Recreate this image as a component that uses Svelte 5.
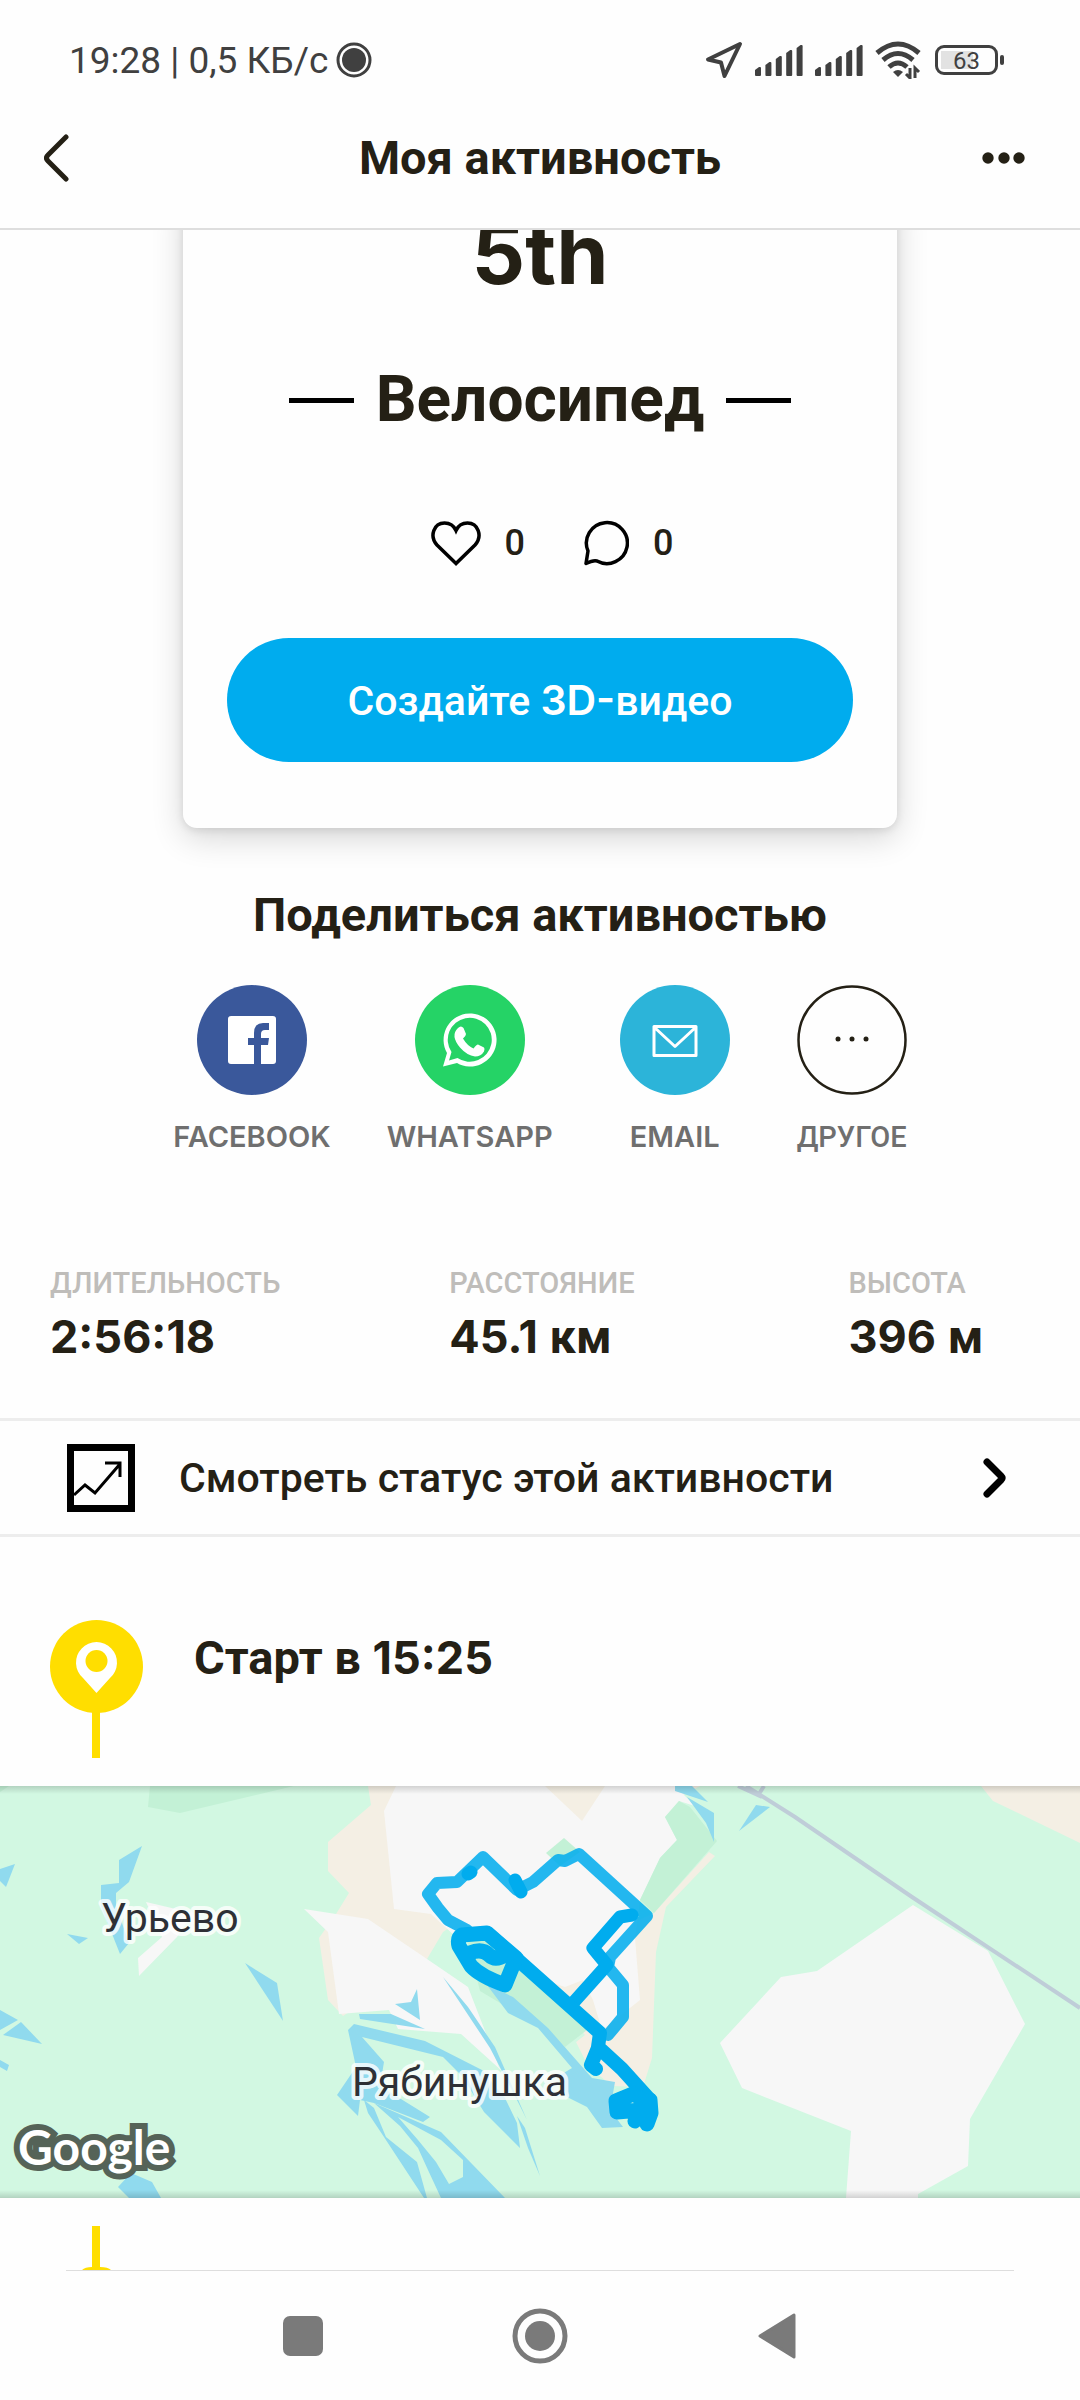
<script lang="ts">
  type Stat = {
    label: string
    value: string
    unit?: string
  }

  const stats: Stat[] = [
    { label: 'Длительность', value: '2:56:18' },
    { label: 'Расстояние', value: '45.1', unit: 'км' },
    { label: 'Высота', value: '396', unit: 'м' },
  ]

  const bars = [8, 13, 19, 25, 30]

  const water = [
    '0,83 15,78 6,101 0,95',
    '119,74 142,60 129,96 116,107 116,120 129,157 120,168 101,120 101,99 119,97',
    '67,148 88,152 79,158',
    '245,177 277,197 283,235',
    '0,224 18,234 0,244',
    '21,236 42,258 3,249',
    '0,274 9,279 7,285 0,281',
    '131,387 152,396 161,412 129,412 118,401',
    '395,218 411,216 417,203 420,234',
    '359,228 391,228 425,243 360,233',
    '354,238 425,255 482,284 505,312 517,337 520,362 484,326 462,290 443,271 362,251 384,276 380,300 430,331 423,336 374,317 360,314 358,330 337,309 356,281 348,244',
    '364,314 374,322 386,351 417,376 427,412 424,412 384,351 368,327',
    '374,317 441,346 505,412 441,412 428,384 418,362 400,340',
    '443,191 468,221 495,261 527,334 518,316 490,262',
    '517,330 525,342 540,390 528,362',
    '487,199 513,211 548,242 592,292 615,296 610,324 623,341 602,342 587,321 567,311 557,291 572,282 538,242 508,227',
    '675,0 692,0 708,16 675,5',
    '687,11 714,27 714,56 706,37',
    '756,19 770,21 739,45',
  ]
</script>

<div class="screen">
  <div class="status">
    <span>19:28 | 0,5 КБ/с</span>
    <svg class="record" width="36" height="36" viewBox="0 0 36 36" aria-hidden="true">
      <circle cx="18" cy="18" r="16" fill="none" stroke="currentColor" stroke-width="3" />
      <circle cx="18" cy="18" r="12" fill="currentColor" />
    </svg>
    <div class="indicators">
      <svg width="38" height="38" viewBox="0 0 38 38" aria-hidden="true">
        <path d="M35 3 3 18.500l13 3L19.500 35Z" fill="none" stroke="currentColor" stroke-width="4" stroke-linejoin="round" />
      </svg>
      {#each [0, 1] as sim (sim)}
        <svg width="48" height="31" viewBox="0 0 48 31" aria-hidden="true">
          {#each bars as height, i (i)}
            <path d="M{i * 10.400} 30v{3 - height}l4 -3h1q1 0 1 1V30q0 1-1 1h-4q-1 0-1-1z" fill="currentColor" />
          {/each}
        </svg>
      {/each}
      <svg width="48" height="38" viewBox="0 0 48 38" aria-hidden="true">
        <g fill="none" stroke="currentColor" stroke-width="5">
          <path d="M2 12q21-18 42 0M8 19q15-13 30 0M14 26q9-8 18 0" />
        </g>
        <path d="M18 31q5-4 10 0l-5 5z" fill="currentColor" />
        <path d="M35 27v10l-4-4M40 37V27l4 4" fill="none" stroke="currentColor" stroke-width="3" />
      </svg>
      <div class="battery"><span>63</span></div>
    </div>
  </div>

  <header>
    <button type="button" aria-label="Назад">
      <svg width="26" height="48" viewBox="0 0 26 48">
        <path d="M22 3 4 21q-3 3 0 6l18 18" fill="none" stroke="currentColor" stroke-width="5" stroke-linecap="round" />
      </svg>
    </button>
    <h1>Моя активность</h1>
    <button type="button" aria-label="Ещё">
      <svg width="44" height="12" viewBox="0 0 44 12" fill="currentColor">
        <circle cx="6" cy="6" r="5.700" /><circle cx="22" cy="6" r="5.700" /><circle cx="37" cy="6" r="5.700" />
      </svg>
    </button>
  </header>

  <main>
    <section class="card">
      <p class="rank">5th</p>
      <h2 class="sport">Велосипед</h2>
      <div class="reactions">
        <button type="button" aria-label="Нравится">
          <svg width="50" height="46" viewBox="0 0 50 46">
            <path d="M25 43.500 6 25C-2 16 3 3 13.500 3 19 3 23 6 25 10.500 27 6 31 3 36.500 3 47 3 52 16 44 25Z" fill="none" stroke="#000" stroke-width="3.500" />
          </svg>
          0
        </button>
        <button type="button" aria-label="Комментарии">
          <svg width="46" height="46" viewBox="0 0 46 46">
            <path d="M3 43.500 5 31A20.500 20.500 0 1 1 14 41Q10 40 3 43.500Z" fill="none" stroke="#000" stroke-width="3.500" stroke-linejoin="round" />
          </svg>
          0
        </button>
      </div>
      <button type="button" class="primary">Создайте <span class="latin">3D-</span>видео</button>
    </section>

    <section class="share">
      <h2>Поделиться активностью</h2>
      <div class="targets">
        <button type="button">
          <svg width="110" height="110" viewBox="0 0 110 110">
            <circle cx="55" cy="55" r="55" fill="#3a589b" />
            <rect x="31" y="31" width="48" height="48" rx="3" fill="#fff" />
            <path d="M57 79V60h-6v-7h6v-5q0-10 9-10h6v7h-4q-4 0-4 4v4h8l-1 7h-7v19z" fill="#3a589b" />
          </svg>
          <span class="latin">FACEBOOK</span>
        </button>
        <button type="button">
          <svg width="110" height="110" viewBox="0 0 110 110">
            <circle cx="55" cy="55" r="55" fill="#25d366" />
            <path d="M28 81.500 32 68A26.500 26.500 0 1 1 42 78Zm6-6 8.500-2.500A22 22 0 1 0 36.500 67Z" fill="#fff" fill-rule="evenodd" />
            <path d="M43 43q3-3 5.500 0l2.500 6q0 2-3 4.500 4 7 10.500 10 3-4 4.500-4l6 3q1 1 0 4-3 5-9 5-8-1-15-9-10-12-2-19.500z" fill="#fff" />
          </svg>
          <span class="latin">WHATSAPP</span>
        </button>
        <button type="button" class="email">
          <svg width="110" height="110" viewBox="0 0 110 110">
            <circle cx="55" cy="55" r="55" fill="#2cb4d9" />
            <path d="M34 41.500h42v29H34zM34 42l21 19.500L76 42" fill="none" stroke="#fff" stroke-width="3" stroke-linejoin="round" />
          </svg>
          <span class="latin">EMAIL</span>
        </button>
        <button type="button">
          <svg width="110" height="110" viewBox="0 0 110 110">
            <circle cx="55" cy="55" r="53.500" fill="none" stroke="#242015" stroke-width="2.500" />
            <g fill="#242015"><circle cx="41" cy="54" r="2.500" /><circle cx="55" cy="54" r="2.500" /><circle cx="69" cy="54" r="2.500" /></g>
          </svg>
          <span>ДРУГОЕ</span>
        </button>
      </div>
    </section>

    <dl class="stats">
      {#each stats as stat (stat.label)}
        <div>
          <dt>{stat.label}</dt>
          <dd><span class="latin">{stat.value}</span>{#if stat.unit}&nbsp;{stat.unit}{/if}</dd>
        </div>
      {/each}
    </dl>

    <a class="status-link" href="#status">
      <svg width="68" height="68" viewBox="0 0 68 68">
        <rect x="3.500" y="3.500" width="61" height="61" fill="none" stroke="#000" stroke-width="7" />
        <path d="m7 51 11-10 10 8 25-29M38 19h15v14" fill="none" stroke="#000" stroke-width="3" />
      </svg>
      <span>Смотреть статус этой активности</span>
      <svg class="chevron" width="26" height="42" viewBox="0 0 26 42">
        <path d="m5 5 14 14q2 2 0 4L5 37" fill="none" stroke="#000" stroke-width="7" stroke-linecap="round" />
      </svg>
    </a>

    <section class="start">
      <svg width="94" height="138" viewBox="0 0 94 138" aria-hidden="true">
        <circle cx="46.500" cy="46.500" r="46.500" fill="#ffde00" />
        <path d="M42 90h8v48h-8z" fill="#ffde00" />
        <path d="M46.500 73Q42 68 33 58A20.500 20.500 0 1 1 60 58Q51 68 46.500 73Z" fill="#fff" />
        <circle cx="46.500" cy="41" r="11" fill="#ffde00" />
      </svg>
      <h3>Старт в <span class="latin">15:25</span></h3>
    </section>

    <svg class="map" viewBox="0 0 1080 412" role="img" aria-label="Карта маршрута">
      <defs>
        <linearGradient id="edge" x2="0" y2="1">
          <stop stop-opacity="0.15" />
          <stop offset="1" stop-opacity="0" />
        </linearGradient>
      </defs>
      <rect width="1080" height="412" fill="#d2f8e2" />

      <!-- fields and forest -->
      <g fill="#f4efe4">
        <path d="M368 0 371 19 328 56V85L349 107 336 128 319 152 328 214 343 230 427 173 443 146 480 120 700 0Z" />
        <path d="M709 66 715 70 666 121 656 166 652 272 643 301 612 300 588 280 576 256 585 249 540 201 583 160 654 127Z" />
        <path d="M981 0 993 15 1080 57V0Z" />
      </g>
      <g fill="#f7f7f7">
        <path d="M396 0 384 25 394 123 431 128 455 150 500 155 545 194 565 201 583 194 593 214 602 244 640 214 635 152 640 114 660 72 677 54 665 31 679 15 695 20 675 0H605L582 35 545 0Z" />
        <path d="M304 123 368 133 427 173 468 201 480 232 499 281 503 286 461 248 398 243 389 224 339 228 328 146Z" />
        <path d="M146 116 193 127 177 151 139 190 138 172 162 151Z" />
        <path d="M913 119 988 165 1025 238 970 333 968 380 918 408V412H846L851 345 742 302 720 257 781 191 817 185Z" />
      </g>
      <g fill="#c3f1d6">
        <path d="M150 0 148 21 180 27 294 0ZM0 0H9L0 6Z" />
        <path d="M679 15 665 31 677 54 660 72 640 114 654 127 717 55 690 21Z" />
        <path d="M546 67 564 52 580 66 560 80Z" />
        <path d="M465 145 500 160 587 244 565 261 545 242 505 220 480 205Z" />
      </g>

      <g fill="#90daee">
        {#each water as points (points)}
          <polygon {points} />
        {/each}
      </g>
      <path d="M398 331 441 354 463 374V391L449 398 436 376 418 354Z" fill="#d2f8e2" />
      <path d="M746 0 795 31 912 111 1080 222M738 0 762 11M764 0 759 8" fill="none" stroke="#bfcdd8" stroke-width="4" />

      <!-- recorded track -->
      <g fill="none" stroke="#00acee" stroke-linecap="round" stroke-linejoin="round">
        <path d="M467 144 448 134 438 122 428 108 437 97 457 96 483 71 517 104 533 96 558 74 565 75 579 68 647 130 610 171 608 181 623 199V231L608 249" stroke-width="12" stroke-opacity="0.86" />
        <path d="M573 217 607 179 593 162 620 131 632 129M468 88 471 86M515 94 521 106" stroke-width="13" />
        <path d="M487 147 518 174 600 247 598 261 622 283 650 314M598 262 591 279 596 283" stroke-width="14" />
        <path d="M462 149 487 147 516 172 505 199Q480 190 471 180L459 160Q457 152 462 149ZM470 167Q482 162 489 169T508 167" stroke-width="15" />
        <path d="M633 308 616 315 617 326 640 324 635 335M640 312 644 330M650 314 651 327 647 338" stroke-width="15" />
      </g>

      <g class="places">
        <text x="101" y="146">Урьево</text>
        <text x="352" y="310">Рябинушка</text>
      </g>
      <text class="brand" x="18" y="379">Google</text>

      <rect width="1080" height="8" fill="url(#edge)" />
      <rect width="1080" height="8" fill="url(#edge)" transform="translate(0 412) scale(1 -1)" />
    </svg>

    <div class="next">
      <svg width="30" height="44" viewBox="0 0 30 44" aria-hidden="true">
        <path d="M10 0h8v41q8 0 11 3H0q3-3 10-3z" fill="#ffde00" />
      </svg>
    </div>
  </main>

  <nav aria-label="Система">
    <button type="button" aria-label="Недавние">
      <svg width="40" height="40" viewBox="0 0 40 40"><rect width="40" height="40" rx="7" fill="currentColor" /></svg>
    </button>
    <button type="button" aria-label="Домой">
      <svg width="56" height="56" viewBox="0 0 56 56">
        <circle cx="28" cy="28" r="25" fill="none" stroke="currentColor" stroke-width="5" />
        <circle cx="28" cy="28" r="15" fill="currentColor" />
      </svg>
    </button>
    <button type="button" aria-label="Назад">
      <svg width="38" height="46" viewBox="0 0 38 46">
        <path d="M36 2V44L2 23Z" fill="currentColor" stroke="currentColor" stroke-width="3" stroke-linejoin="round" />
      </svg>
    </button>
  </nav>
</div>

<style>
  :global(body) {
    margin: 0;
    background: #fefefe;
  }

  .screen {
    display: flex;
    flex-direction: column;
    min-height: 100vh;
    font-family: Roboto, 'Noto Sans', sans-serif;
    color: #242015;
  }

  h1,
  h2,
  h3,
  p,
  dl,
  dd {
    margin: 0;
  }

  svg {
    display: block;
    flex: none;
  }

  button {
    padding: 0;
    border: 0;
    background: none;
    font: inherit;
    color: inherit;
  }

  .latin {
    font-family: Inter, Roboto, sans-serif;
  }

  .status {
    display: flex;
    align-items: center;
    height: 56px;
    padding: 32px 76px 0 69px;
    font-size: 37px;
    color: #404040;
  }

  .record {
    margin-left: 8px;
  }

  .indicators {
    display: flex;
    align-items: center;
    gap: 12px;
    margin-left: auto;
  }

  .battery {
    position: relative;
    box-sizing: border-box;
    width: 63px;
    height: 30px;
    margin-right: 6px;
    border: 3px solid #404040;
    border-radius: 9px;
    background: linear-gradient(#e2e2e2, #e2e2e2) 3px 3px / 32px 18px no-repeat;
    font-size: 24px;
    line-height: 26px;
    text-align: center;
  }

  .battery::after {
    content: '';
    position: absolute;
    top: 7px;
    right: -9px;
    width: 4px;
    height: 10px;
    border-radius: 2px;
    background: #404040;
  }

  header {
    display: grid;
    grid-template-columns: 1fr auto 1fr;
    align-items: center;
    height: 140px;
    padding: 0 44px;
    border-bottom: 2px solid #dedede;
  }

  header button:last-child {
    justify-self: end;
    margin-right: 10px;
  }

  h1,
  .share h2,
  h3 {
    font-size: 47px;
    line-height: 56px;
    font-weight: 700;
  }

  main {
    overflow: hidden;
  }

  .card {
    display: flex;
    flex-direction: column;
    align-items: center;
    box-sizing: border-box;
    width: 66.2%;
    margin: -40px auto 0;
    padding: 16px 44px 66px;
    border-radius: 14px;
    box-shadow: 0 10px 32px rgb(0 0 0 / 16%), 0 2px 8px rgb(0 0 0 / 10%);
  }

  .rank {
    font: 700 84px/96px Inter, sans-serif;
  }

  .sport {
    display: flex;
    align-items: center;
    gap: 22px;
    margin-top: 62px;
    font-size: 64px;
    line-height: 72px;
    font-weight: 700;
  }

  .sport::before,
  .sport::after {
    content: '';
    width: 65px;
    height: 5px;
    background: #000;
  }

  .reactions {
    display: flex;
    gap: 58px;
    margin: 84px 0 72px 24px;
  }

  .reactions button {
    display: flex;
    align-items: center;
    gap: 24px;
    font-size: 36px;
    line-height: 46px;
    font-weight: 500;
  }

  .primary {
    align-self: stretch;
    height: 124px;
    border-radius: 62px;
    background: #00acee;
    font-size: 41px;
    font-weight: 500;
    color: #fff;
  }

  .primary .latin {
    font-weight: 600;
  }

  .share {
    margin-top: 59px;
    text-align: center;
  }

  .targets {
    display: flex;
    justify-content: center;
    gap: 56px;
    margin-top: 42px;
  }

  .targets button {
    display: flex;
    flex-direction: column;
    align-items: center;
    gap: 26px;
    min-width: 110px;
    font-size: 29px;
    line-height: 32px;
    font-weight: 500;
    color: #6f6f6f;
  }

  .targets .email {
    min-width: 132px;
  }

  .targets .latin {
    font-weight: 600;
  }

  .stats {
    display: grid;
    grid-template-columns: 11fr 11fr 5fr;
    margin-top: 114px;
    padding: 0 50px;
  }

  dt {
    font-size: 29px;
    line-height: 32px;
    font-weight: 500;
    text-transform: uppercase;
    color: #bfbdba;
  }

  dd {
    margin-top: 10px;
    font-size: 47px;
    line-height: 56px;
    font-weight: 700;
    white-space: nowrap;
  }

  dd .latin,
  h3 .latin {
    font-size: 45px;
  }

  .status-link {
    display: flex;
    align-items: center;
    height: 113px;
    margin-top: 53px;
    padding: 0 72px 0 67px;
    border: solid #ededed;
    border-width: 3px 0;
    font-size: 41px;
    font-weight: 500;
    color: inherit;
    text-decoration: none;
  }

  .status-link span {
    margin-left: 44px;
  }

  .chevron {
    margin-left: auto;
  }

  .start {
    display: flex;
    gap: 50px;
    margin-top: 83px;
    padding-left: 50px;
  }

  h3 {
    margin-top: 10px;
  }

  .map {
    width: 100%;
    height: auto;
    margin-top: 28px;
  }

  .places {
    font-size: 41px;
    fill: #2e3036;
    stroke: rgb(255 255 255 / 80%);
    stroke-width: 8px;
    stroke-linejoin: round;
    paint-order: stroke;
  }

  .brand {
    font: 700 48px Lato, sans-serif;
    fill: #fff;
    stroke: #556358;
    stroke-width: 12px;
    paint-order: stroke;
  }

  .next {
    padding: 28px 0 0 82px;
  }

  nav {
    display: flex;
    flex: 1;
    align-items: center;
    justify-content: center;
    gap: 157px;
    min-height: 128px;
    margin: 0 66px;
    border-top: 1px solid #dedede;
    color: #7a7a7a;
  }

  nav button {
    display: flex;
    justify-content: center;
    width: 80px;
  }
</style>
